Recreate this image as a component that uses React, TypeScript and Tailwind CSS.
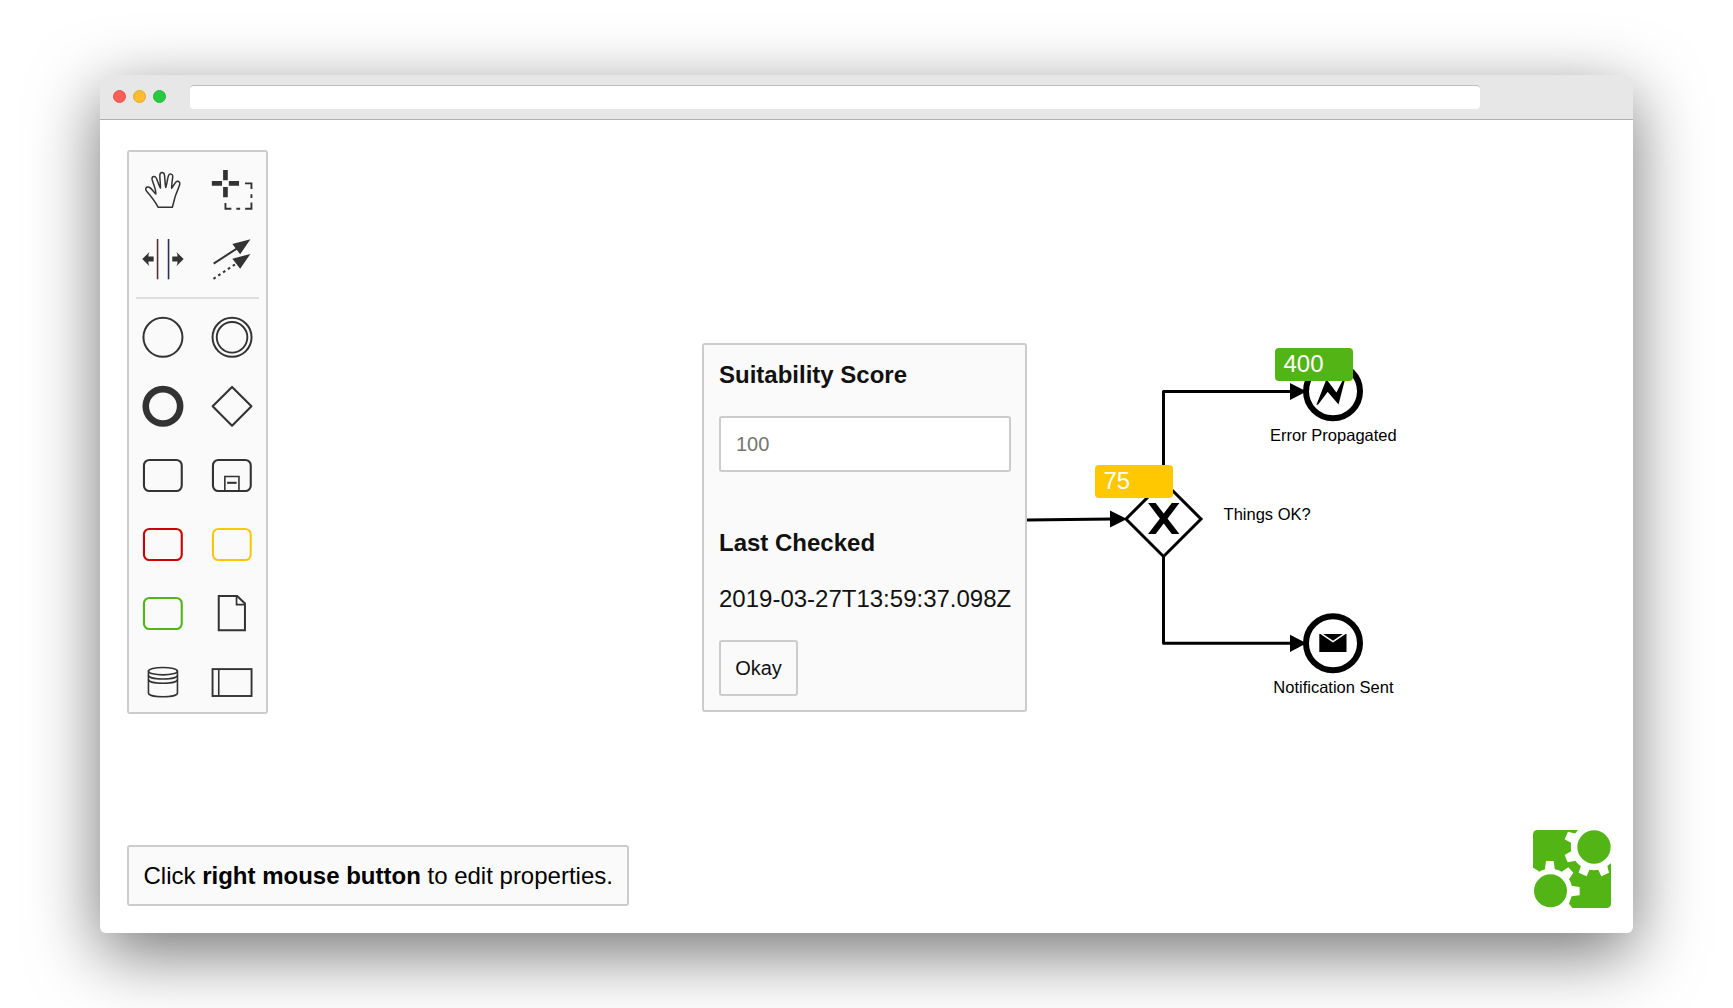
import type { ReactNode } from "react";

const INK = "#333333";

function Tool({ children, label }: { children: ReactNode; label: string }) {
  return (
    <button type="button" aria-label={label} className="block h-[69px] w-[69px]">
      <svg viewBox="0.35 0 69 69" className="block h-[69px] w-[69px]" fill="none" stroke={INK} strokeWidth={2.1}>
        {children}
      </svg>
    </button>
  );
}

function TaskShape({ color = INK }: { color?: string }) {
  return <rect x="15.3" y="19" width="37.8" height="31" rx="5.5" stroke={color} strokeWidth="2.1" />;
}

function Palette() {
  return (
    <div className="absolute left-[27px] top-[30px] h-[564px] w-[141px] rounded-[3px] border-2 border-[#cccccc] bg-[#fafafa] pt-1">
      <div className="grid w-[138px] grid-cols-2">
        <Tool label="Hand tool">
          <path
            strokeWidth="1.5"
            strokeLinejoin="round"
            d="M29.4 51.2 C27 46.5 23 41 18 35.3 C16 32.8 17.2 30.6 20 31.1 C22.8 31.8 24.7 35.7 27.2 38 C27.4 33 24.4 27.6 23.4 23.4 C23 20.2 26.2 19.4 27.6 22 C29.2 25.5 30 29 31.8 32 C32 28 31 23 31.2 18.8 C31.6 15.8 35.2 15.8 35.8 18.8 C36.5 23 36.2 27.6 37.1 31.4 C38.5 27.8 38.6 23.2 39.8 19.8 C40.8 17 44.3 17.8 44.1 20.8 C43.5 25.2 42.9 28.8 43 32.2 C44.8 30.4 45.5 28 47.1 26.2 C49 24.2 51.7 25.6 51.1 28.3 C50 32.5 47.8 36.4 46.4 41 C45.5 44.5 44.6 48 43.7 51.2 Z"
          />
        </Tool>
        <Tool label="Lasso tool">
          <path strokeWidth="4.7" d="M14.2 27.4H24.4 M31.2 27.4H41.4 M27.8 14V24.2 M27.8 31V41.2" />
          <path strokeWidth="1.9" d="M47.3 27.4H53.8V33 M53.8 38.3V42 M53.8 46.5V52.7H47.5 M38.7 52.7H42.5 M33.7 52.7H27.8V47" />
        </Tool>
        <Tool label="Space tool">
          <path strokeWidth="1.6" d="M39.9 14V54.3" stroke="#2f2f55" />
          <path strokeWidth="1.6" d="M28.9 14V54.3" stroke="#553333" />
          <g fill={INK} stroke="none">
            <path d="M13.6 34.1 L20.8 27 Q19.6 29.4 19.8 31.6 H25 V36.6 H19.8 Q19.6 38.8 20.8 41.2 Z" />
            <path d="M55 34.1 L47.8 27 Q49 29.4 48.8 31.6 H43.6 V36.6 H48.8 Q49 38.8 47.8 41.2 Z" />
          </g>
        </Tool>
        <Tool label="Connect tool">
          <path strokeWidth="2" d="M16 38.7L41 22.3" />
          <path strokeWidth="2" strokeDasharray="2.6 3.2" d="M15.8 53.8L38 39" />
          <path fill={INK} stroke="none" d="M52.8 14.2L34.7 19L42.5 29.2Z M52.8 28.9L34.7 33.7L42.5 43.8Z" />
        </Tool>
      </div>
      <div className="mb-1 ml-[7px] mt-[3px] h-0.5 w-[123px] bg-[#dddddd]" />
      <div className="grid w-[138px] grid-cols-2">
        <Tool label="Start event">
          <circle cx="34.3" cy="34.3" r="19.5" strokeWidth="2" />
        </Tool>
        <Tool label="Intermediate event">
          <circle cx="34.4" cy="34.3" r="19.5" strokeWidth="2" />
          <circle cx="34.4" cy="34.3" r="15.3" strokeWidth="1.9" />
        </Tool>
        <Tool label="End event">
          <circle cx="34.3" cy="34.3" r="17.2" strokeWidth="6.6" />
        </Tool>
        <Tool label="Gateway">
          <path d="M34.4 14.9L53.8 34.3L34.4 53.7L15 34.3Z" strokeLinejoin="round" />
        </Tool>
        <Tool label="Task">
          <TaskShape />
        </Tool>
        <Tool label="Sub-process">
          <TaskShape />
          <path strokeWidth="1.6" d="M27.2 50V35.5H41.3V50" />
          <path d="M29.5 41.8H39" />
        </Tool>
        <Tool label="Red task">
          <TaskShape color="#cc0000" />
        </Tool>
        <Tool label="Yellow task">
          <TaskShape color="#ffc800" />
        </Tool>
        <Tool label="Green task">
          <TaskShape color="#52b415" />
        </Tool>
        <Tool label="Data object">
          <path strokeWidth="2" d="M21.1 17H39.5L47.3 24.5V51.3H21.1Z" />
          <path strokeWidth="1.7" d="M38.9 17V25.6H47.3" />
        </Tool>
        <Tool label="Data store">
          <g strokeWidth="1.6">
            <ellipse cx="34.3" cy="23.2" rx="14.5" ry="3.7" />
            <path d="M19.8 23.2V45C19.8 50 48.8 50 48.8 45V23.2" />
            <path d="M19.8 27.3C19.8 32.3 48.8 32.3 48.8 27.3 M19.8 31.5C19.8 36.5 48.8 36.5 48.8 31.5" />
          </g>
        </Tool>
        <Tool label="Participant">
          <rect x="14.9" y="21.1" width="39" height="26.9" strokeWidth="1.9" />
          <path strokeWidth="1.6" d="M21.1 21V48" />
        </Tool>
      </div>
    </div>
  );
}

function Flow() {
  return (
    <svg
      viewBox="100 120 1533 813"
      className="absolute left-0 top-0 h-[813px] w-[1533px]"
      fontFamily='"Liberation Sans", Arial, sans-serif'
    >
      <g fill="none" stroke="#000" strokeWidth="3">
        <path d="M1027 520L1112 519" />
        <path strokeLinejoin="round" d="M1163.5 482V391.5H1292" />
        <path strokeLinejoin="round" d="M1163.5 556V643.3H1292" />
        <path fill="#fff" d="M1163.5 481.5L1201 519L1163.5 556.5L1126 519Z" />
        <circle fill="#fff" cx="1333" cy="391.3" r="27" strokeWidth="6" />
        <circle fill="#fff" cx="1333" cy="643.3" r="27" strokeWidth="6" />
      </g>
      <path d="M1110 510.6L1127 519L1110 527.6Z M1290 382.9L1306.5 391.5L1290 400.1Z M1290 634.7L1306.5 643.3L1290 651.9Z" />
      <path
        transform="translate(1126 481.5) scale(1.5)"
        stroke="#000"
        strokeWidth="1.3"
        d="m16 15 7.43 9.71-7.43 9.71h3.43l5.71-7.46 5.72 7.46h3.43l-7.43-9.71 7.43-9.71h-3.43l-5.72 7.46L19.43 15z"
      />
      <path
        transform="translate(1306.800 364.800) scale(1.5)"
        stroke="#000"
        d="m7.2 26 .085-.023 6.672-8.737 6.97 8.151L25.2 8.827l-5.337 10.591-6.636-8.714z"
      />
      <rect x="1319.3" y="634" width="27.2" height="18" />
      <path d="M1320.5 633.2L1333 641.6L1345.5 633.2" fill="none" stroke="#fff" strokeWidth="1.6" />
      <g fontSize="16.5">
        <text x="1223.6" y="520">Things OK?</text>
        <text x="1333.4" y="441" textAnchor="middle">Error Propagated</text>
        <text x="1333.4" y="693" textAnchor="middle">Notification Sent</text>
      </g>
    </svg>
  );
}

function Logo() {
  return (
    <svg viewBox="99 90 234 234" className="absolute bottom-[25px] right-[22px] h-[78px] w-[78px]">
      <rect x="99" y="90" width="234" height="234" rx="13" fill="#52b415" />
      <g fill="#fff">
        <circle cx="282" cy="141" r="69.5" />
        <path d="M335 80V188L322 196L290 150Z M228 84H340V130H260Z" />
        <path d="M204 95L228 101L240 88L270 140L213 129V128L194 118Z" />
        <path d="M194 165L213 154L240 150L240 182L228 182L203 187Z" />
        <path d="M243 197L236 218L260 229L269 208Z M294 208L304 229L327 218L321 194Z" />
        <circle cx="151" cy="272" r="66" />
        <path d="M138 183H161L165 212H134Z M205 202L220 218L207 238L185 215Z M239 261V286L214 289V257Z" />
        <path d="M97 202L116 213L120 260V272H151V326H97Z M214 288L207 311L219 326H150V290Z" />
      </g>
      <g fill="#52b415">
        <circle cx="282" cy="141" r="50" />
        <circle cx="151.5" cy="272.5" r="49.5" />
      </g>
    </svg>
  );
}

function PropertiesCard() {
  return (
    <form
      className="absolute left-[602px] top-[223px] flex h-[369px] w-[325px] flex-col rounded-[3px] border-2 border-[#cccccc] bg-[#fafafa] px-[15px] text-2xl text-[#111111]"
      onSubmit={(event) => event.preventDefault()}
    >
      <label htmlFor="score" className="mt-3.5 block h-8 whitespace-nowrap font-bold">
        Suitability Score
      </label>
      <input
        id="score"
        placeholder="100"
        className="mt-[25px] h-[56px] w-[292px] shrink-0 rounded-[3px] border-2 border-[#cccccc] bg-white px-[15px] text-xl placeholder:text-[#757575]"
      />
      <div className="mt-[55px] h-8 whitespace-nowrap font-bold">Last Checked</div>
      <div className="mt-6 h-8 whitespace-nowrap">2019-03-27T13:59:37.098Z</div>
      <button
        type="submit"
        className="mt-[25px] h-[56px] w-[79px] shrink-0 rounded-[3px] border-2 border-[#cccccc] bg-[#fafafa] text-xl"
      >
        Okay
      </button>
    </form>
  );
}

export default function App() {
  return (
    <div className="h-[1008px] w-[1733px] overflow-hidden bg-white px-[100px] pt-[75px] font-['Liberation_Sans',Arial,sans-serif]">
      <div className="flex h-[858px] w-[1533px] flex-col overflow-hidden rounded-md bg-white shadow-[0_20px_68px_rgba(0,0,0,0.55)]">
        <header className="flex h-[45px] shrink-0 items-center border-b border-[#b0b0b0] bg-[#e7e7e7] pl-[13px]">
          <div className="mb-px flex gap-[7px]">
            <span className="h-[13px] w-[13px] rounded-full border border-[#e8534c] bg-[#ff5f57]" />
            <span className="h-[13px] w-[13px] rounded-full border border-[#e5a632] bg-[#ffbd2e]" />
            <span className="h-[13px] w-[13px] rounded-full border border-[#25b53a] bg-[#28ca42]" />
          </div>
          <div className="ml-6 h-6 w-[1290px] rounded border-t border-[#bdbdbd] bg-white" />
        </header>
        <main className="relative h-[813px] w-[1533px]">
          <Palette />
          <Flow />
          <PropertiesCard />
          <div className="absolute left-[994.500px] top-[345px] h-[33px] w-[78px] rounded bg-[#ffc800] pl-[9px] text-2xl leading-[32px] text-white">
            75
          </div>
          <div className="absolute left-[1174.500px] top-[228px] h-[33px] w-[78px] rounded bg-[#52b415] pl-[9px] text-2xl leading-[32px] text-white">
            400
          </div>
          <div className="absolute left-[27px] top-[725px] flex h-[61px] w-[502px] items-center whitespace-pre rounded-[3px] border-2 border-[#cccccc] bg-[#fafafa] pl-[14.500px] text-2xl text-black">
            Click <b>right mouse button</b> to edit properties.
          </div>
          <Logo />
        </main>
      </div>
    </div>
  );
}
